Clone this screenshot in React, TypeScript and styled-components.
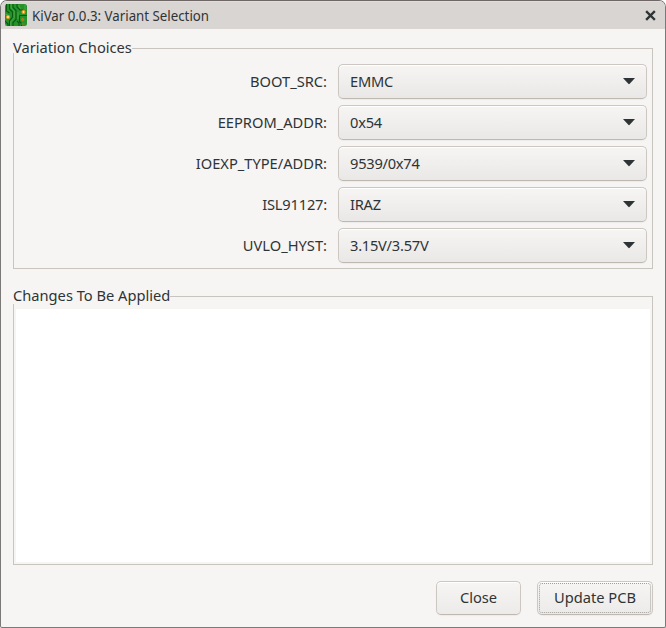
import React from "react";
import styled, { createGlobalStyle, css } from "styled-components";

const GlobalStyle = createGlobalStyle`
  *, *::before, *::after { box-sizing: border-box; }
  html, body { margin: 0; background: #fff; }
  body { overflow: hidden; }
`;

const Window = styled.main`
  display: flex;
  flex-direction: column;
  width: 666px;
  height: 628px;
  border: 1px solid #7b7977;
  border-top-color: #6f6766;
  border-radius: 7px 7px 2px 2px;
  overflow: hidden;
  background: #f6f5f4;
  color: #2e3436;
  font: 14.67px/20px "Noto Sans", sans-serif;
`;

const TitleBar = styled.header`
  display: flex;
  align-items: center;
  flex: none;
  height: 28px;
  padding: 0 9px 0 4px;
  background: #d9d5d2;
  box-shadow: inset 0 1px #e1dddb;
`;

const Title = styled.h1`
  flex: 1;
  margin: 0 0 0 5px;
  padding-top: 2px;
  font-size: 14px;
  font-weight: 400;
  line-height: 20px;
  white-space: nowrap;
`;

const TitleText = styled.span`
  display: inline-block;
  transform: scaleX(0.948);
  transform-origin: left;
`;

const CloseIconButton = styled.button`
  display: flex;
  padding: 0;
  border: 0;
  background: none;
`;

const Content = styled.div`
  display: flex;
  flex-direction: column;
  flex: 1;
  padding: 19px 12px 12px;
`;

const Group = styled.section<{ $height: number; $gap?: number }>`
  display: flex;
  flex-direction: column;
  flex: none;
  height: ${(p) => p.$height}px;
  margin-bottom: ${(p) => p.$gap ?? 0}px;
  border: 1px solid #c8c4be;
`;

const Legend = styled.h2<{ $cover: number }>`
  align-self: flex-start;
  flex: none;
  height: ${(p) => p.$cover}px;
  margin: -12px 0 0 -1px;
  background: #f6f5f4;
  font-size: inherit;
  font-weight: 400;
  line-height: 20px;
  white-space: nowrap;
`;

const Choices = styled.div`
  display: grid;
  grid-template-columns: 1fr 309px;
  grid-auto-rows: 35px;
  gap: 6px 11px;
  margin-top: 11px;
  padding-right: 5px;
`;

const Label = styled.label<{ $tight?: boolean }>`
  align-self: center;
  padding-bottom: 1px;
  text-align: right;
  letter-spacing: ${(p) => (p.$tight ? "-0.2px" : "normal")};
`;

const raised = css`
  border: 1px solid #cdc7c2;
  border-bottom-color: #bfb8b1;
  border-radius: 5px;
  background: linear-gradient(#f6f5f4 0%, #f3f2f1 25%, #eae8e6 100%);
  box-shadow: inset 0 1px #fff, 0 1px 1px rgba(0, 0, 0, 0.04);
  color: inherit;
  font: inherit;
`;

const Dropdown = styled.button`
  ${raised}
  display: flex;
  align-items: center;
  justify-content: space-between;
  padding: 0 11px 2px;
  letter-spacing: -0.25px;
`;

const PreviewPane = styled.div`
  flex: 1;
  margin: 5px 2px 2px;
  background: #fff;
`;

const Actions = styled.footer`
  display: flex;
  justify-content: flex-end;
  gap: 16px;
  margin-top: 16px;
`;

const ActionButton = styled.button<{ $width: number; $focused?: boolean }>`
  ${raised}
  width: ${(p) => p.$width}px;
  height: 34px;
  padding: 0 0 2px;
  background: linear-gradient(#f6f5f4, #edebea);
  ${(p) =>
    p.$focused &&
    css`
      outline: 1px dotted #a09f9d;
      outline-offset: -3px;
    `}
`;

const choices = [
  { name: "BOOT_SRC:", value: "EMMC" },
  { name: "EEPROM_ADDR:", value: "0x54" },
  { name: "IOEXP_TYPE/ADDR:", value: "9539/0x74" },
  { name: "ISL91127:", value: "IRAZ", tight: true },
  { name: "UVLO_HYST:", value: "3.15V/3.57V" },
];

const BoardIcon = () => (
  <svg width="22" height="22" viewBox="0 0 22 22">
    <rect width="22" height="22" rx="2.5" fill="#25922a" />
    <g fill="none" stroke="#0a5a12" strokeWidth="1.1">
      <path d="M1.500 0v7l3 2M4.500 0v5l3 3v5l-3 4v5M8 0v3.500l3 3v9l-3 3V22" />
      <path d="M12 0v3l3 3h3M14 22v-3l-2-2M14.500 11.500h7.500M14.500 11.500v6l2 2V22M0 17l3 3v2" />
    </g>
    <g fill="none" stroke="#58b154" strokeWidth=".7">
      <path d="M6.200 0v4l3 3v7l-3.500 4v4M0 10l3 1M14 1v2l2 1.500M20 0v6M13 8v7M0 20l1 2" />
    </g>
    <g fill="#fff0b0" stroke="#ee9418" strokeWidth="1.2">
      <circle cx="3" cy="13" r="1.500" />
      <circle cx="18.500" cy="8" r="1.500" />
    </g>
    <circle cx="17.700" cy="15.500" r="1.300" fill="#dc8d1c" />
    <path d="M15.800 15.500h4M17.700 13.600v4M16 20h3.500" stroke="#a9781a" strokeWidth=".9" />
  </svg>
);

const CloseIcon = () => (
  <svg width="11" height="11" viewBox="0 0 11 11">
    <path d="M2 2l7 7M9 2l-7 7" stroke="#2e3436" strokeWidth="2.4" strokeLinecap="square" />
  </svg>
);

const ArrowIcon = () => (
  <svg width="12" height="8" viewBox="0 0 12 8">
    <path d="M0 1h12L6.700 6.800q-.7.7-1.400 0z" fill="#2e3436" />
  </svg>
);

export default function App() {
  return (
    <>
      <GlobalStyle />
      <Window>
        <TitleBar>
          <BoardIcon />
          <Title>
            <TitleText>KiVar 0.0.3: Variant Selection</TitleText>
          </Title>
          <CloseIconButton aria-label="Close window">
            <CloseIcon />
          </CloseIconButton>
        </TitleBar>
        <Content>
          <Group $height={221} $gap={27}>
            <Legend $cover={16}>Variation Choices</Legend>
            <Choices>
              {choices.map(({ name, value, tight }) => (
                <React.Fragment key={name}>
                  <Label $tight={tight}>{name}</Label>
                  <Dropdown>
                    <span>{value}</span>
                    <ArrowIcon />
                  </Dropdown>
                </React.Fragment>
              ))}
            </Choices>
          </Group>
          <Group $height={269}>
            <Legend $cover={19}>Changes To Be Applied</Legend>
            <PreviewPane />
          </Group>
          <Actions>
            <ActionButton $width={85}>Close</ActionButton>
            <ActionButton $width={116} $focused>
              Update PCB
            </ActionButton>
          </Actions>
        </Content>
      </Window>
    </>
  );
}
